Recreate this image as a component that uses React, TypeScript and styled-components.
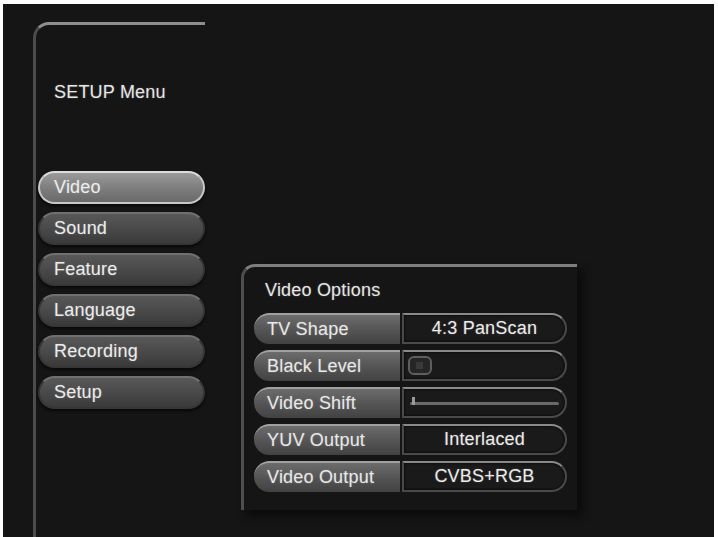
import styled, { createGlobalStyle } from "styled-components";

const GlobalStyle = createGlobalStyle`
  body {
    margin: 0;
    background: #fff;
    font-family: "Liberation Sans", Arial, sans-serif;
  }
`;

const Screen = styled.div`
  margin: 4px 0 0 3px;
  width: 711px;
  height: 533px;
  box-sizing: border-box;
  padding: 18px 0 0 30px;
  background: #151515;
  display: flex;
  align-items: flex-start;
  overflow: hidden;
`;

const Sidebar = styled.div`
  width: 172px;
  height: 530px;
  box-sizing: border-box;
  border-top: 3px solid #8e8e8e;
  border-left: 3px solid #4c4c4c;
  border-top-left-radius: 16px;
  padding-left: 2px;
  display: flex;
  flex-direction: column;
`;

const MenuTitle = styled.div`
  margin: 56px 0 68px 16px;
  font-size: 18px;
  line-height: 22px;
  letter-spacing: 0.2px;
  color: #e6e6e6;
  text-shadow: 0 0 2px rgba(255, 255, 255, 0.25);
`;

const MenuList = styled.div`
  display: flex;
  flex-direction: column;
  gap: 8px;
`;

const MenuButton = styled.div<{ $active?: boolean }>`
  height: 33px;
  box-sizing: border-box;
  width: 167px;
  border-radius: 17px;
  padding-left: 14px;
  display: flex;
  align-items: center;
  font-size: 18px;
  letter-spacing: 0.2px;
  color: #ececec;
  text-shadow: 0 0 2px rgba(255, 255, 255, 0.25);
  background: ${(p) =>
    p.$active
      ? "linear-gradient(#9a9a9a, #7c7c7c 55%, #6a6a6a)"
      : "linear-gradient(#585858, #484848 55%, #3a3a3a)"};
  border: 2px solid ${(p) => (p.$active ? "#c8c8c8" : "#363636")};
  border-top-color: ${(p) => (p.$active ? "#dcdcdc" : "#707070")};
  box-shadow: 0 2px 3px #080808;
`;

const Options = styled.div`
  margin: 242px 0 0 36px;
  width: 336px;
  height: 246px;
  box-sizing: border-box;
  border-top: 3px solid #7e7e7e;
  border-left: 3px solid #4e4e4e;
  border-top-left-radius: 14px;
  box-shadow: 6px 6px 8px #0b0b0b;
  padding-left: 10px;
  display: flex;
  flex-direction: column;
`;

const OptionsTitle = styled.div`
  margin: 13px 0 12px 11px;
  font-size: 18px;
  line-height: 21px;
  letter-spacing: 0.2px;
  color: #e6e6e6;
  text-shadow: 0 0 2px rgba(255, 255, 255, 0.25);
`;

const Rows = styled.div`
  display: flex;
  flex-direction: column;
  gap: 6px;
`;

const Row = styled.div`
  display: flex;
  gap: 2px;
  height: 31px;
  font-size: 18px;
  letter-spacing: 0.2px;
  text-shadow: 0 0 2px rgba(255, 255, 255, 0.25);
`;

const Label = styled.div`
  width: 146px;
  box-sizing: border-box;
  border-radius: 16px 0 0 16px;
  background: linear-gradient(#6c6c6c, #555 50%, #424242);
  border-top: 2px solid #a0a0a0;
  padding-left: 13px;
  display: flex;
  align-items: center;
  color: #e8e8e8;
`;

const Value = styled.div`
  width: 165px;
  box-sizing: border-box;
  border-radius: 0 16px 16px 0;
  background: #1a1a1a;
  border: 2px solid #4a4a4a;
  border-top-color: #8a8a8a;
  box-shadow: inset 0 0 3px #000;
  display: flex;
  align-items: center;
  justify-content: center;
  color: #ececec;
  position: relative;
`;

const Knob = styled.div`
  position: absolute;
  left: 4px;
  top: 4px;
  width: 24px;
  height: 19px;
  box-sizing: border-box;
  border-radius: 6px;
  border: 2px solid #5e5e5e;
  background: #262626;
  &::after {
    content: "";
    position: absolute;
    left: 6px;
    top: 4px;
    width: 7px;
    height: 7px;
    background: #3a3a3a;
  }
`;

const Track = styled.div`
  position: absolute;
  left: 6px;
  right: 6px;
  top: 13px;
  height: 3px;
  border-radius: 2px;
  background: #6a6a6a;
  &::before {
    content: "";
    position: absolute;
    left: 2px;
    top: -5px;
    width: 3px;
    height: 8px;
    background: #9a9a9a;
  }
`;

const menu = ["Video", "Sound", "Feature", "Language", "Recording", "Setup"];

const App = () => {
  return (
    <>
      <GlobalStyle />
      <Screen>
        <Sidebar>
          <MenuTitle>SETUP Menu</MenuTitle>
          <MenuList>
            {menu.map((m) => (
              <MenuButton key={m} $active={m === "Video"}>
                {m}
              </MenuButton>
            ))}
          </MenuList>
        </Sidebar>
        <Options>
          <OptionsTitle>Video Options</OptionsTitle>
          <Rows>
            <Row>
              <Label>TV Shape</Label>
              <Value>4:3 PanScan</Value>
            </Row>
            <Row>
              <Label>Black Level</Label>
              <Value>
                <Knob />
              </Value>
            </Row>
            <Row>
              <Label>Video Shift</Label>
              <Value>
                <Track />
              </Value>
            </Row>
            <Row>
              <Label>YUV Output</Label>
              <Value>Interlaced</Value>
            </Row>
            <Row>
              <Label>Video Output</Label>
              <Value>CVBS+RGB</Value>
            </Row>
          </Rows>
        </Options>
      </Screen>
    </>
  );
};

export default App;
